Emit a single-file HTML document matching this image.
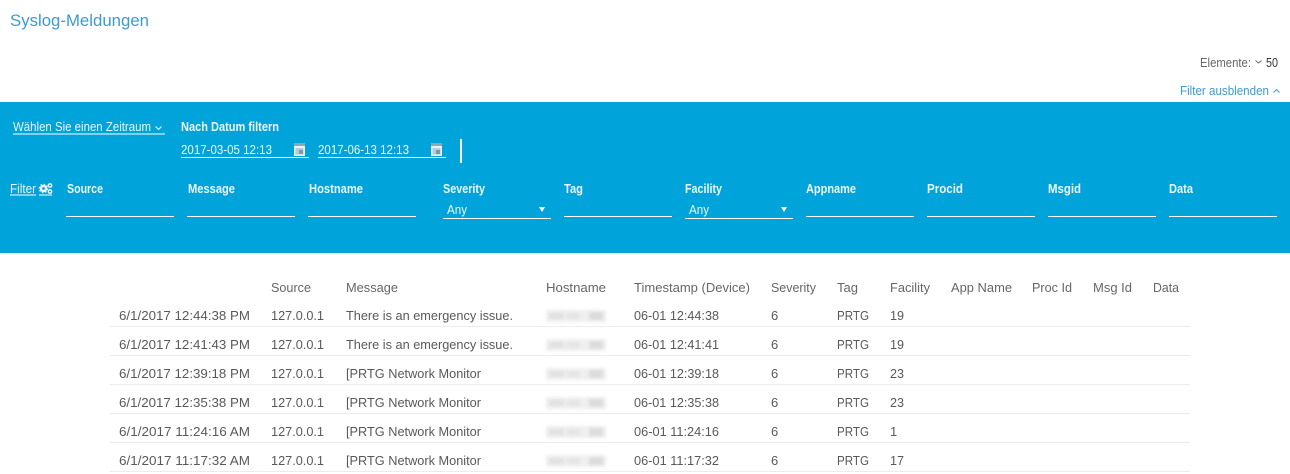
<!DOCTYPE html>
<html lang="de">
<head>
<meta charset="utf-8">
<title>Syslog-Meldungen</title>
<style>
html,body{margin:0;padding:0;background:#fff;width:1290px;height:474px;overflow:hidden}
svg{display:block;position:absolute;left:0;top:0}
text{font-family:"Liberation Sans",sans-serif;font-size:13px;fill:#595959}
.b text{fill:#eaf7fc;font-weight:bold;font-size:12.5px}
.h text{fill:#666}
</style>
</head>
<body>
<svg width="1290" height="474" viewBox="0 0 1290 474" xmlns="http://www.w3.org/2000/svg">
<defs>
<filter id="bl" x="-20%" y="-60%" width="140%" height="220%"><feGaussianBlur stdDeviation="1.6"/></filter>
<g id="host">
<rect x="546" y="0" width="60" height="12" fill="#efefef"/>
<rect x="549" y="3" width="15" height="6" fill="#e0e0e0"/>
<rect x="567" y="3" width="13" height="6" fill="#e4e4e4"/>
<rect x="589" y="2" width="14" height="8" fill="#dcdcdc"/>
</g>
<g id="cal" fill="none">
<rect x="0" y="0" width="11" height="13" fill="#e6f5fb"/>
<rect x="0" y="0" width="11" height="3" fill="#8fa7b3"/>
<rect x="1.5" y="5" width="8" height="6.5" fill="#b4cdd9"/>
<rect x="5" y="7" width="4" height="4" fill="#7d99a7"/>
</g>
</defs>

<text x="10" y="26" textLength="139" lengthAdjust="spacingAndGlyphs" style="font-size:16.5px;fill:#3c9bcf">Syslog-Meldungen</text>

<text x="1200" y="67" textLength="51" lengthAdjust="spacingAndGlyphs" style="font-size:12.5px;fill:#666">Elemente:</text>
<path d="M1255.5 60.5l3 2.5 3-2.5" fill="none" stroke="#666" stroke-width="1"/>
<text x="1266" y="67" textLength="12" lengthAdjust="spacingAndGlyphs" style="font-size:13px;fill:#333">50</text>

<text x="1180" y="95" textLength="89" lengthAdjust="spacingAndGlyphs" style="font-size:12.5px;fill:#3c9bcf">Filter ausblenden</text>
<path d="M1273.5 92.5l3-3 3 3" fill="none" stroke="#3c9bcf" stroke-width="1"/>

<rect x="0" y="102" width="1290" height="151" fill="#01a3db"/>

<g>
<text x="13" y="131" textLength="138" lengthAdjust="spacingAndGlyphs" style="font-size:12.5px;fill:#eaf7fc">Wählen Sie einen Zeitraum</text>
<path d="M155.5 126.5l3 3 3-3" fill="none" stroke="#fff" stroke-width="1"/>
<rect x="13" y="133.5" width="152" height="1" fill="#fff"/>
<text x="181" y="154" textLength="91" lengthAdjust="spacingAndGlyphs" style="font-size:13px;fill:#eaf7fc">2017-03-05 12:13</text>
<text x="318" y="154" textLength="91" lengthAdjust="spacingAndGlyphs" style="font-size:13px;fill:#eaf7fc">2017-06-13 12:13</text>
<rect x="181" y="157" width="128" height="1" fill="#fff"/>
<rect x="318" y="157" width="128" height="1" fill="#fff"/>
<use href="#cal" x="294" y="143"/>
<use href="#cal" x="431" y="143"/>
<rect x="460" y="139" width="2" height="24" fill="#fff"/>
</g>

<g class="b">
<text x="181" y="131" textLength="98" lengthAdjust="spacingAndGlyphs">Nach Datum filtern</text>
<text x="67" y="193" textLength="36" lengthAdjust="spacingAndGlyphs">Source</text>
<text x="188" y="193" textLength="47" lengthAdjust="spacingAndGlyphs">Message</text>
<text x="309" y="193" textLength="54" lengthAdjust="spacingAndGlyphs">Hostname</text>
<text x="443" y="193" textLength="42" lengthAdjust="spacingAndGlyphs">Severity</text>
<text x="564" y="193" textLength="19" lengthAdjust="spacingAndGlyphs">Tag</text>
<text x="685" y="193" textLength="37" lengthAdjust="spacingAndGlyphs">Facility</text>
<text x="806" y="193" textLength="50" lengthAdjust="spacingAndGlyphs">Appname</text>
<text x="927" y="193" textLength="36" lengthAdjust="spacingAndGlyphs">Procid</text>
<text x="1048" y="193" textLength="33" lengthAdjust="spacingAndGlyphs">Msgid</text>
<text x="1169" y="193" textLength="24" lengthAdjust="spacingAndGlyphs">Data</text>
</g>

<text x="10" y="193" textLength="26" lengthAdjust="spacingAndGlyphs" style="font-size:12.5px;fill:#eaf7fc">Filter</text>
<rect x="10" y="194.5" width="26" height="1" fill="#fff"/>
<rect x="39" y="194.5" width="13" height="1" fill="#fff"/>
<circle cx="43.5" cy="188.5" r="2.6" fill="none" stroke="#eaf7fc" stroke-width="2.4"/>
<circle cx="43.5" cy="188.5" r="4.2" fill="none" stroke="#eaf7fc" stroke-width="1.2" stroke-dasharray="1.6 1.7"/>
<circle cx="50" cy="185.5" r="1.7" fill="none" stroke="#eaf7fc" stroke-width="1.4"/>
<circle cx="50" cy="191.5" r="1.7" fill="none" stroke="#eaf7fc" stroke-width="1.4"/>

<g fill="#fff">
<rect x="66" y="216" width="108" height="1"/>
<rect x="187" y="216" width="108" height="1"/>
<rect x="308" y="216" width="108" height="1"/>
<rect x="443" y="218" width="108" height="1"/>
<rect x="564" y="216" width="108" height="1"/>
<rect x="685" y="218" width="108" height="1"/>
<rect x="806" y="216" width="108" height="1"/>
<rect x="927" y="216" width="108" height="1"/>
<rect x="1048" y="216" width="108" height="1"/>
<rect x="1169" y="216" width="108" height="1"/>
<path d="M539 207h6l-3 5z"/>
<path d="M781 207h6l-3 5z"/>
</g>
<text x="447" y="214" textLength="20" lengthAdjust="spacingAndGlyphs" style="font-size:12.5px;fill:#eaf7fc">Any</text>
<text x="689" y="214" textLength="20" lengthAdjust="spacingAndGlyphs" style="font-size:12.5px;fill:#eaf7fc">Any</text>

<g class="h">
<text x="271" y="292" textLength="40" lengthAdjust="spacingAndGlyphs">Source</text>
<text x="346" y="292" textLength="52" lengthAdjust="spacingAndGlyphs">Message</text>
<text x="546" y="292" textLength="60" lengthAdjust="spacingAndGlyphs">Hostname</text>
<text x="634" y="292" textLength="116" lengthAdjust="spacingAndGlyphs">Timestamp (Device)</text>
<text x="771" y="292" textLength="45" lengthAdjust="spacingAndGlyphs">Severity</text>
<text x="837" y="292" textLength="21" lengthAdjust="spacingAndGlyphs">Tag</text>
<text x="890" y="292" textLength="40" lengthAdjust="spacingAndGlyphs">Facility</text>
<text x="951" y="292" textLength="61" lengthAdjust="spacingAndGlyphs">App Name</text>
<text x="1032" y="292" textLength="40" lengthAdjust="spacingAndGlyphs">Proc Id</text>
<text x="1093" y="292" textLength="39" lengthAdjust="spacingAndGlyphs">Msg Id</text>
<text x="1153" y="292" textLength="26" lengthAdjust="spacingAndGlyphs">Data</text>
</g>

<g fill="#ececec">
<rect x="110" y="326" width="1080" height="1"/>
<rect x="110" y="355" width="1080" height="1"/>
<rect x="110" y="384" width="1080" height="1"/>
<rect x="110" y="413" width="1080" height="1"/>
<rect x="110" y="442" width="1080" height="1"/>
<rect x="110" y="471" width="1080" height="1"/>
</g>

<g filter="url(#bl)">
<use href="#host" y="310"/>
<use href="#host" y="339"/>
<use href="#host" y="368"/>
<use href="#host" y="397"/>
<use href="#host" y="426"/>
<use href="#host" y="455"/>
</g>

<g>
<text x="119" y="320" textLength="131" lengthAdjust="spacingAndGlyphs">6/1/2017 12:44:38 PM</text>
<text x="271" y="320" textLength="53" lengthAdjust="spacingAndGlyphs">127.0.0.1</text>
<text x="346" y="320" textLength="167" lengthAdjust="spacingAndGlyphs">There is an emergency issue.</text>
<text x="634" y="320" textLength="85" lengthAdjust="spacingAndGlyphs">06-01 12:44:38</text>
<text x="771" y="320">6</text>
<text x="837" y="320" textLength="32" lengthAdjust="spacingAndGlyphs">PRTG</text>
<text x="890" y="320" textLength="14" lengthAdjust="spacingAndGlyphs">19</text>

<text x="119" y="349" textLength="131" lengthAdjust="spacingAndGlyphs">6/1/2017 12:41:43 PM</text>
<text x="271" y="349" textLength="53" lengthAdjust="spacingAndGlyphs">127.0.0.1</text>
<text x="346" y="349" textLength="167" lengthAdjust="spacingAndGlyphs">There is an emergency issue.</text>
<text x="634" y="349" textLength="85" lengthAdjust="spacingAndGlyphs">06-01 12:41:41</text>
<text x="771" y="349">6</text>
<text x="837" y="349" textLength="32" lengthAdjust="spacingAndGlyphs">PRTG</text>
<text x="890" y="349" textLength="14" lengthAdjust="spacingAndGlyphs">19</text>

<text x="119" y="378" textLength="131" lengthAdjust="spacingAndGlyphs">6/1/2017 12:39:18 PM</text>
<text x="271" y="378" textLength="53" lengthAdjust="spacingAndGlyphs">127.0.0.1</text>
<text x="346" y="378" textLength="135" lengthAdjust="spacingAndGlyphs">[PRTG Network Monitor</text>
<text x="634" y="378" textLength="85" lengthAdjust="spacingAndGlyphs">06-01 12:39:18</text>
<text x="771" y="378">6</text>
<text x="837" y="378" textLength="32" lengthAdjust="spacingAndGlyphs">PRTG</text>
<text x="890" y="378" textLength="14" lengthAdjust="spacingAndGlyphs">23</text>

<text x="119" y="407" textLength="131" lengthAdjust="spacingAndGlyphs">6/1/2017 12:35:38 PM</text>
<text x="271" y="407" textLength="53" lengthAdjust="spacingAndGlyphs">127.0.0.1</text>
<text x="346" y="407" textLength="135" lengthAdjust="spacingAndGlyphs">[PRTG Network Monitor</text>
<text x="634" y="407" textLength="85" lengthAdjust="spacingAndGlyphs">06-01 12:35:38</text>
<text x="771" y="407">6</text>
<text x="837" y="407" textLength="32" lengthAdjust="spacingAndGlyphs">PRTG</text>
<text x="890" y="407" textLength="14" lengthAdjust="spacingAndGlyphs">23</text>

<text x="119" y="436" textLength="131" lengthAdjust="spacingAndGlyphs">6/1/2017 11:24:16 AM</text>
<text x="271" y="436" textLength="53" lengthAdjust="spacingAndGlyphs">127.0.0.1</text>
<text x="346" y="436" textLength="135" lengthAdjust="spacingAndGlyphs">[PRTG Network Monitor</text>
<text x="634" y="436" textLength="85" lengthAdjust="spacingAndGlyphs">06-01 11:24:16</text>
<text x="771" y="436">6</text>
<text x="837" y="436" textLength="32" lengthAdjust="spacingAndGlyphs">PRTG</text>
<text x="890" y="436">1</text>

<text x="119" y="465" textLength="131" lengthAdjust="spacingAndGlyphs">6/1/2017 11:17:32 AM</text>
<text x="271" y="465" textLength="53" lengthAdjust="spacingAndGlyphs">127.0.0.1</text>
<text x="346" y="465" textLength="135" lengthAdjust="spacingAndGlyphs">[PRTG Network Monitor</text>
<text x="634" y="465" textLength="85" lengthAdjust="spacingAndGlyphs">06-01 11:17:32</text>
<text x="771" y="465">6</text>
<text x="837" y="465" textLength="32" lengthAdjust="spacingAndGlyphs">PRTG</text>
<text x="890" y="465" textLength="14" lengthAdjust="spacingAndGlyphs">17</text>
</g>
</svg>
</body>
</html>
